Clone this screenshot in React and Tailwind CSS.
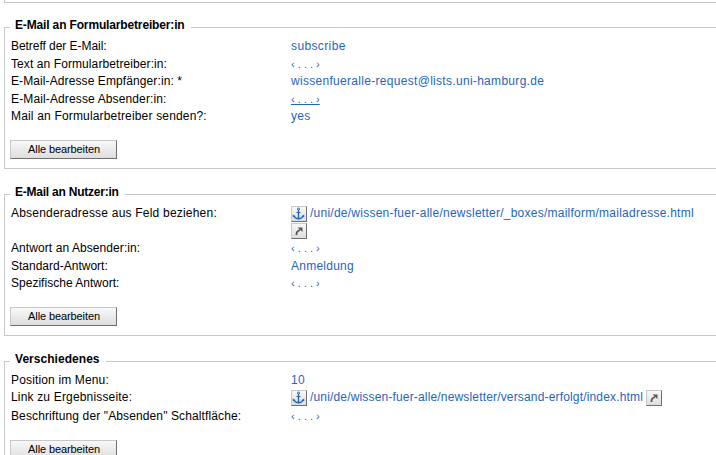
import React from 'react';

const EMPTY = '‹ . . . ›';

const SECTIONS = [
  {
    title: 'E-Mail an Formularbetreiber:in',
    titleSpacing: 'tracking-[-0.15px]',
    rows: [
      { label: 'Betreff der E-Mail:', spacing: 'tracking-[-0.05px]', value: 'subscribe', valueSpacing: 'tracking-[0.38px]', height: 'h-[18px]' },
      { label: 'Text an Formularbetreiber:in:', spacing: 'tracking-[0.09px]', value: EMPTY, height: 'h-[17px]' },
      { label: 'E-Mail-Adresse Empfänger:in: *', spacing: 'tracking-[0.1px]', value: 'wissenfueralle-request@lists.uni-hamburg.de', valueSpacing: 'tracking-[0.3px]', height: 'h-[18px]' },
      { label: 'E-Mail-Adresse Absender:in:', spacing: 'tracking-[0.13px]', value: EMPTY, underline: true, height: 'h-[17px]' },
      { label: 'Mail an Formularbetreiber senden?:', spacing: 'tracking-[0.17px]', value: 'yes', height: 'h-[17px]' },
    ],
  },
  {
    title: 'E-Mail an Nutzer:in',
    titleSpacing: 'tracking-[-0.23px]',
    rows: [
      { label: 'Absenderadresse aus Feld beziehen:', spacing: 'tracking-[0.21px]', value: '/uni/de/wissen-fuer-alle/newsletter/_boxes/mailform/mailadresse.html', link: 'stacked', height: 'h-[35px]' },
      { label: 'Antwort an Absender:in:', spacing: 'tracking-[0.08px]', value: EMPTY, height: 'h-[18px]' },
      { label: 'Standard-Antwort:', spacing: 'tracking-[0px]', value: 'Anmeldung', height: 'h-[17px]' },
      { label: 'Spezifische Antwort:', spacing: 'tracking-[0.02px]', value: EMPTY, height: 'h-[17px]' },
    ],
  },
  {
    title: 'Verschiedenes',
    titleSpacing: 'tracking-[0.04px]',
    rows: [
      { label: 'Position im Menu:', spacing: 'tracking-[0.15px]', value: '10', height: 'h-[17px]' },
      { label: 'Link zu Ergebnisseite:', spacing: 'tracking-[0.17px]', value: '/uni/de/wissen-fuer-alle/newsletter/versand-erfolgt/index.html', valueSpacing: 'tracking-[0.165px]', link: 'inline', height: 'h-[19px]' },
      { label: 'Beschriftung der "Absenden" Schaltfläche:', spacing: 'tracking-[0.12px]', value: EMPTY, height: 'h-[17px]' },
    ],
  },
];

const IconButton = ({ children }) => (
  <button
    type="button"
    className="flex h-4 w-4 shrink-0 items-center justify-center border border-t-[#c8c8c8] border-l-[#c8c8c8] border-r-[#6e6e6e] border-b-[#6e6e6e] bg-linear-to-b from-[#f8f8f8] to-[#dedede]"
  >
    {children}
  </button>
);

const AnchorIcon = () => (
  <svg width="14" height="14" viewBox="0 0 14 14" fill="none" stroke="#1f64b4">
    <circle cx="6.5" cy="2" r="1" />
    <path d="M6.5 3V12.4" strokeWidth="1.3" />
    <path d="M4.5 5.5h4" />
    <path d="M2 9c.6 1.8 2.2 2.7 4.5 2.7S10.400 10.800 11 9" strokeWidth="1.200" />
    <path d="M.8 10.200V7.400L3.600 9.200zM12.200 10.200V7.400L9.400 9.200z" fill="#1f64b4" stroke="none" />
  </svg>
);

const ArrowIcon = () => (
  <svg width="14" height="14" viewBox="0 0 14 14" fill="none">
    <path d="M4.500 11c-.3-2.200.7-4 3.500-5" stroke="#555" strokeWidth="1.800" />
    <path d="M5.500 3.500H10.500v4.500z" fill="#555" />
  </svg>
);

const Value = ({ value, valueSpacing = '', link, underline }) => {
  if (!link) {
    const short = value === EMPTY;
    return (
      <a className={`block ${short ? 'text-[11px] leading-[17px] tracking-[0px]' : valueSpacing} ${underline ? 'underline underline-offset-1' : ''}`}>{value}</a>
    );
  }
  return (
    <div className={link === 'stacked' ? 'flex flex-col gap-px pt-px' : 'flex gap-[3px] pt-px'}>
      <div className="flex h-4 gap-[3px]">
        <IconButton><AnchorIcon /></IconButton>
        <a className={`-mt-px ${valueSpacing}`}>{value}</a>
      </div>
      <IconButton><ArrowIcon /></IconButton>
    </div>
  );
};

const Section = ({ title, titleSpacing, rows }) => (
  <fieldset className="mb-[17px] h-[150px] border border-r-0 border-[#c8c8c8] pl-[5px]">
    <legend className={`h-[17px] pr-[6px] pl-[5px] text-[12px] leading-[13px] font-bold text-black ${titleSpacing}`}>{title}</legend>
    <div className="pt-[2px] pl-px">
      {rows.map((row) => (
        <div key={row.label} className={`flex ${row.height}`}>
          <div className={`w-[280px] shrink-0 ${row.spacing}`}>{row.label}</div>
          <div className="text-[#1f64c0]">
            <Value {...row} />
          </div>
        </div>
      ))}
    </div>
    <button
      type="button"
      className="mt-[15px] block h-[19px] w-[107px] border border-t-[#c8c8c8] border-l-[#c8c8c8] border-r-[#6e6e6e] border-b-[#6e6e6e] bg-linear-to-b from-[#f8f8f8] to-[#dedede] pl-px text-[11px] leading-[17px] tracking-[-0.1px] text-black"
    >
      Alle bearbeiten
    </button>
  </fieldset>
);

const App = () => (
  <div className="h-[455px] w-[716px] overflow-hidden bg-white pl-1 font-['Liberation_Sans',Arial,sans-serif] text-[12px] leading-4 tracking-[0.25px] whitespace-nowrap text-black">
    {/* tail of the section above */}
    <div className="mb-4 h-[3px] border-b border-l border-[#c8c8c8]" />
    {SECTIONS.map((section) => (
      <Section key={section.title} {...section} />
    ))}
  </div>
);

export default App;
